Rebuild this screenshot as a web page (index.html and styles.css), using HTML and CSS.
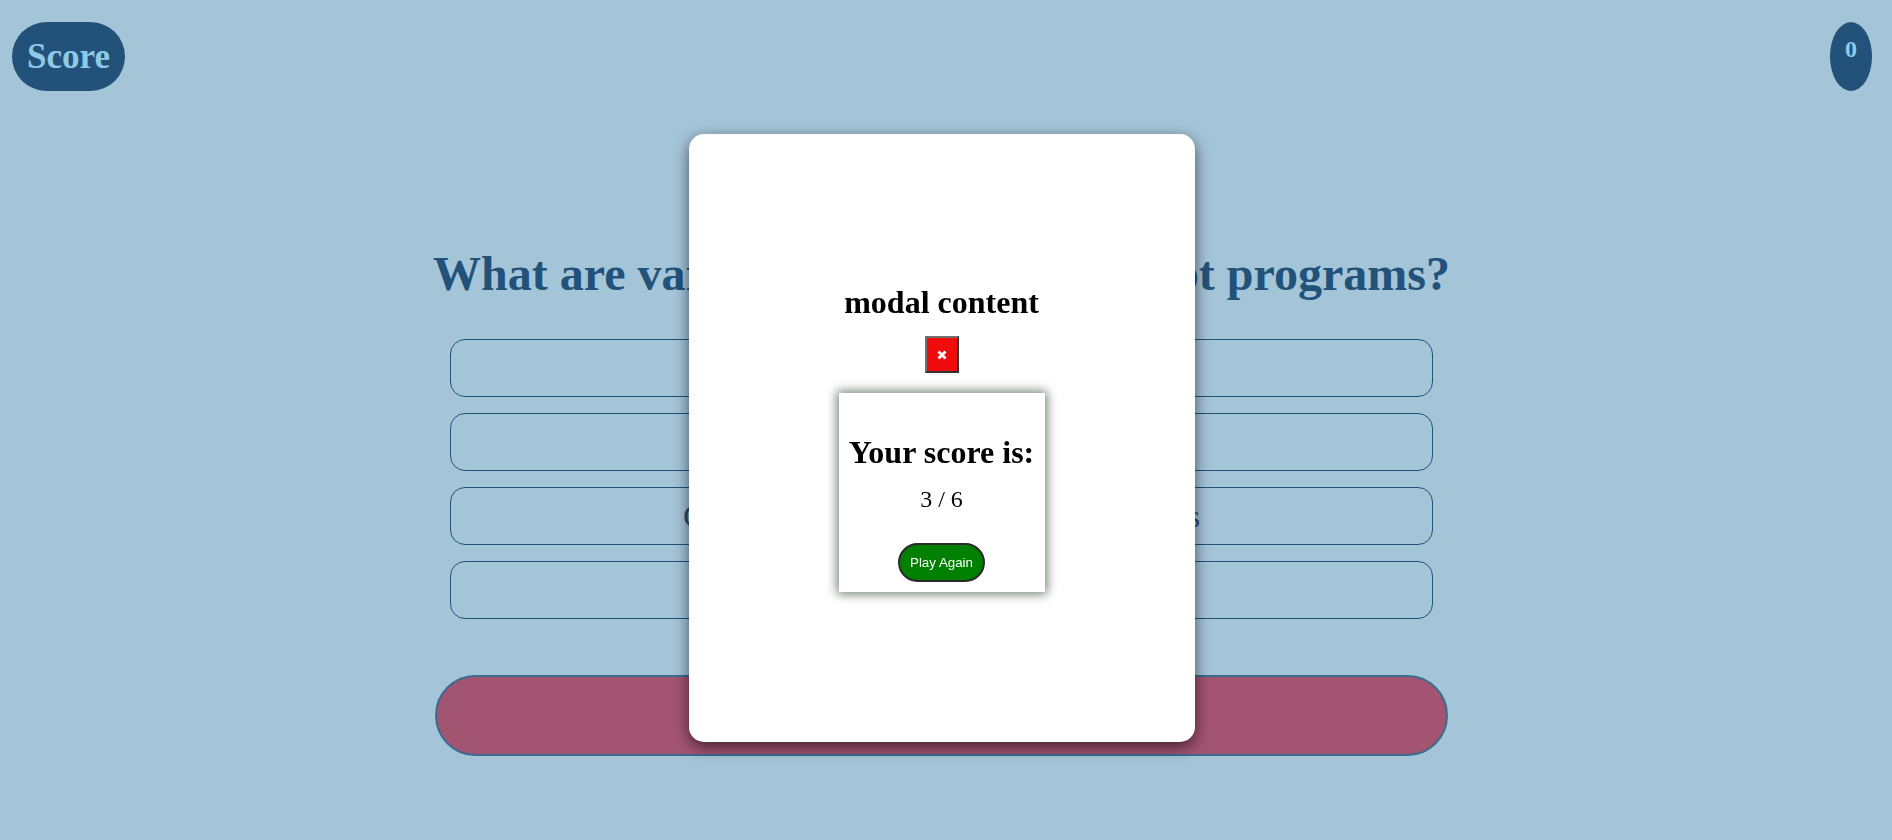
FILE: index.html
```html
<!DOCTYPE html>
<html lang="en">
<head>
<meta charset="utf-8">
<title>Quiz</title>
<link rel="stylesheet" href="styles.css">
</head>
<body>
<div class="page">
  <header class="topbar">
    <div class="score-pill">Score</div>
    <div class="score-count">0</div>
  </header>
  <main class="quiz">
    <h1 class="question">What are variables used in JavaScript programs?</h1>
    <div class="answers">
      <button class="answer">Storing values</button>
      <button class="answer">Varying randomly</button>
      <button class="answer">Causing high-school algebra flashbacks</button>
      <button class="answer">None of the above</button>
    </div>
    <button class="next">Next</button>
  </main>
</div>
<div class="overlay">
  <div class="modal">
    <h1 class="modal-title">modal content</h1>
    <button class="close-btn" aria-label="close">
      <svg width="10" height="10" viewBox="0 0 10 10"><path d="M1.5 1.5 L8.5 8.5 M8.5 1.5 L1.5 8.5" stroke="#fff" stroke-width="2.8" stroke-linecap="butt"/></svg>
    </button>
    <div class="result-card">
      <h1 class="result-title">Your score is:</h1>
      <p class="result-value">3 / 6</p>
      <button class="play-again">Play Again</button>
    </div>
  </div>
</div>
</body>
</html>
```

FILE: styles.css
```css
html, body {
  margin: 0;
  padding: 0;
}
body {
  background: #a4c4d8;
  font-family: "Liberation Serif", "Times New Roman", serif;
  height: 840px;
  overflow: hidden;
}
.page {
  padding-right: 9px;
}
.topbar {
  display: flex;
  justify-content: space-between;
  align-items: flex-start;
  padding: 22px 11px 0 12px;
}
.score-pill {
  width: 113px;
  height: 69px;
  border-radius: 35px;
  background: #22527a;
  color: #8ecae6;
  font-weight: bold;
  font-size: 35px;
  display: flex;
  align-items: center;
  justify-content: center;
}
.score-count {
  width: 42px;
  height: 69px;
  border-radius: 50%;
  background: #22527a;
  color: #8ecae6;
  font-weight: bold;
  font-size: 24px;
  text-align: center;
  box-sizing: border-box;
  padding-top: 14px;
}
.quiz {
  width: 1013px;
  margin: 0 auto;
  display: flex;
  flex-direction: column;
  align-items: center;
}
.question {
  margin: 155px 0 0;
  font-size: 48px;
  line-height: normal;
  color: #22527a;
  font-weight: bold;
  white-space: nowrap;
}
.answers {
  margin-top: 38px;
  width: 983px;
  display: flex;
  flex-direction: column;
  gap: 16px;
}
.answer {
  height: 58px;
  padding: 0;
  background: transparent;
  border: 1px solid #22527a;
  border-radius: 15px;
  font-family: "Liberation Serif", "Times New Roman", serif;
  font-size: 32.5px;
  color: #22527a;
  white-space: nowrap;
}
.next {
  margin-top: 56px;
  width: 1013px;
  height: 81px;
  background: #a35471;
  border: 2px solid #3b6c8f;
  border-radius: 41px;
  font-family: "Liberation Serif", serif;
  font-size: 30px;
  color: #a35471;
}
.overlay {
  position: fixed;
  inset: 0;
  display: flex;
  justify-content: center;
  align-items: flex-start;
  padding: 134px 9px 0 0;
}
.modal {
  width: 506px;
  height: 608px;
  background: #fff;
  border-radius: 15px;
  box-shadow: 0 5px 15px rgba(0, 0, 0, 0.6);
  display: flex;
  flex-direction: column;
  align-items: center;
  justify-content: center;
}
.modal-title {
  margin: 0;
  font-size: 32px;
  line-height: normal;
  font-weight: bold;
  color: #000;
}
.close-btn {
  margin-top: 15px;
  width: 34px;
  height: 37px;
  padding: 0;
  background: #f00c0c;
  border: 2px solid;
  border-color: #707070 #333 #333 #707070;
  display: flex;
  align-items: center;
  justify-content: center;
}
.close-btn svg {
  display: block;
}
.result-card {
  margin-top: 20px;
  width: 206px;
  height: 199px;
  box-sizing: border-box;
  padding-top: 41px;
  background: #fff;
  box-shadow: 0 0 10px 2px #6f806f;
  display: flex;
  flex-direction: column;
  align-items: center;
}
.result-title {
  margin: 0;
  font-size: 32px;
  line-height: normal;
  font-weight: bold;
  white-space: nowrap;
}
.result-value {
  margin: 15px 0 0;
  font-size: 24px;
  line-height: normal;
}
.play-again {
  margin-top: 30px;
  width: 87px;
  height: 39px;
  padding: 0;
  background: #008000;
  color: #fff;
  border: 2px solid #2a2a2a;
  border-radius: 20px;
  font-family: "Liberation Sans", Arial, sans-serif;
  font-size: 13.333px;
}
```
